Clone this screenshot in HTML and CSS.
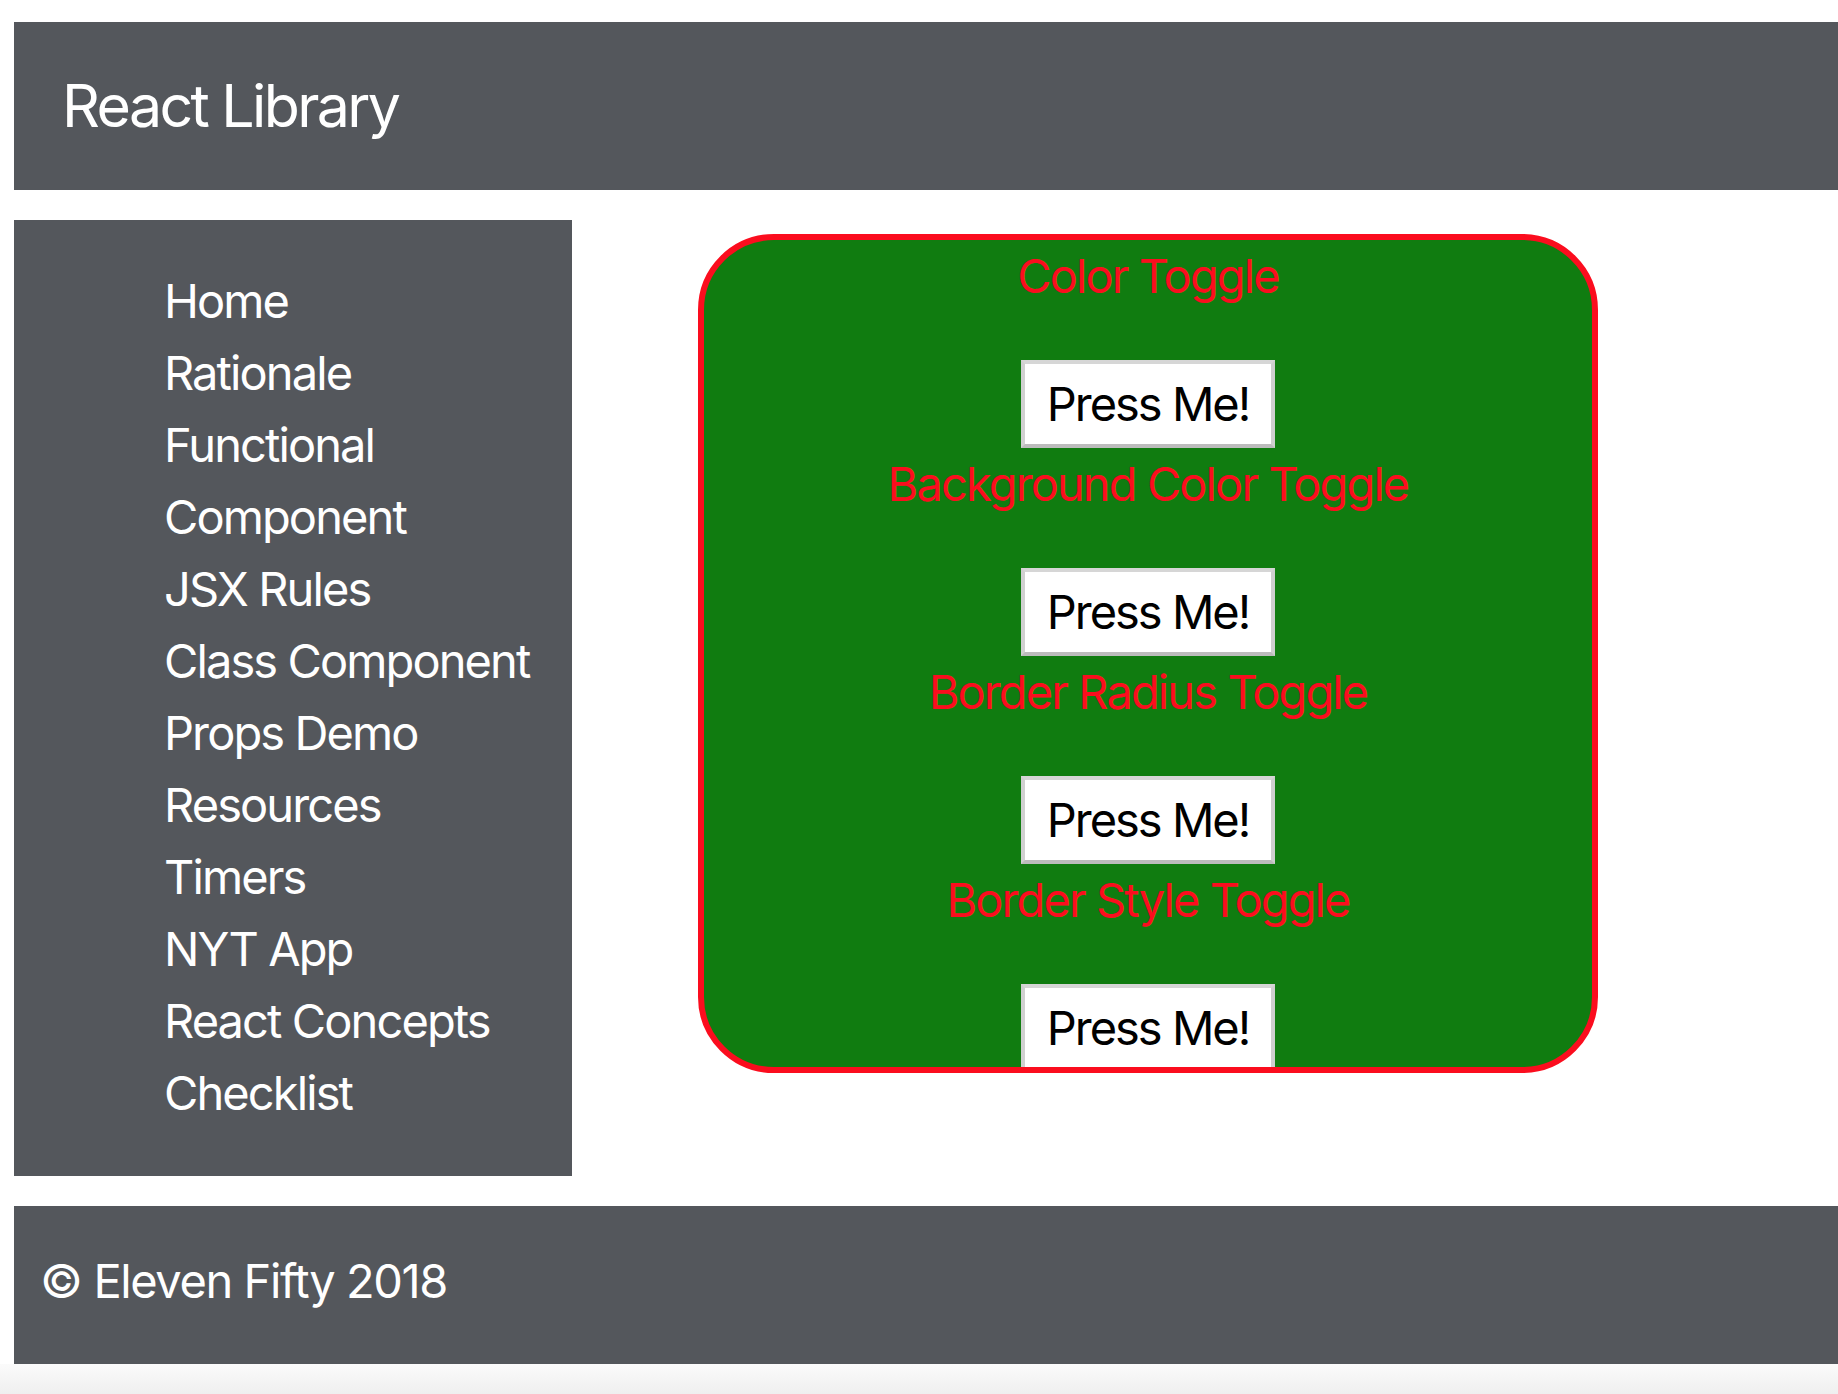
FILE: index.html
```html
<!DOCTYPE html>
<html lang="en">
<head>
<meta charset="utf-8">
<title>React Library</title>
<link rel="stylesheet" href="styles.css">
</head>
<body>
<div class="page">
  <header class="topbar">
    <span class="brand">React Library</span>
  </header>
  <div class="middle">
    <nav class="sidebar">
      <ul class="nav-list">
        <li>Home</li>
        <li>Rationale</li>
        <li>Functional</li>
        <li>Component</li>
        <li>JSX Rules</li>
        <li>Class Component</li>
        <li>Props Demo</li>
        <li>Resources</li>
        <li>Timers</li>
        <li>NYT App</li>
        <li>React Concepts</li>
        <li>Checklist</li>
      </ul>
    </nav>
    <main class="content">
      <div class="toggle-box">
        <p class="toggle-label">Color Toggle</p>
        <button class="press-btn">Press Me!</button>
        <p class="toggle-label">Background Color Toggle</p>
        <button class="press-btn">Press Me!</button>
        <p class="toggle-label">Border Radius Toggle</p>
        <button class="press-btn">Press Me!</button>
        <p class="toggle-label">Border Style Toggle</p>
        <button class="press-btn">Press Me!</button>
      </div>
    </main>
  </div>
  <footer class="footer">
    <span class="copy">© Eleven Fifty 2018</span>
  </footer>
</div>
<div class="shade"></div>
</body>
</html>
```

FILE: styles.css
```css
* { box-sizing: border-box; }
html, body { margin: 0; padding: 0; background: #ffffff; }
body {
  font-family: Inter, "Noto Sans", sans-serif;
  color: #ffffff;
  width: 1838px;
  overflow: hidden;
}
.page { padding: 22px 0 0 14px; }
.topbar {
  height: 168px;
  background: #54575c;
  display: flex;
  align-items: center;
  padding-left: 48px;
}
.brand { font-size: 59px; line-height: 72px; letter-spacing: -2.6px; }
.middle { display: flex; align-items: flex-start; margin-top: 30px; }
.sidebar {
  width: 558px;
  height: 956px;
  background: #54575c;
  padding: 45px 0 0 150px;
}
.nav-list { list-style: none; margin: 0; padding: 0; }
.nav-list li { font-size: 47px; line-height: 72px; letter-spacing: -1.9px; white-space: nowrap; }
.content { padding: 14px 0 0 126px; }
.toggle-box {
  width: 900px;
  height: 839px;
  background: #107c10;
  border: 6px solid #fb0d1e;
  border-radius: 76px;
  overflow: hidden;
  display: flex;
  flex-direction: column;
  align-items: center;
}
.toggle-label {
  margin: 0 0 48px;
  font-size: 47px;
  line-height: 72px;
  letter-spacing: -1.9px;
  color: #fb0d1e;
  white-space: nowrap;
}
.press-btn {
  flex: none;
  height: 88px;
  font-family: Inter, "Noto Sans", sans-serif;
  font-size: 47px;
  line-height: 58px;
  letter-spacing: -2px;
  color: #000;
  background: #fff;
  border-style: solid;
  border-width: 4px;
  border-color: #d6d6d6 #cfcfcf #bcbcbc #d0d0d0;
  padding: 11px 22px;
  border-radius: 0;
}
.footer {
  margin-top: 30px;
  height: 158px;
  background: #54575c;
  padding: 39px 0 0 26px;
}
.copy { font-size: 47px; line-height: 72px; letter-spacing: -1.4px; }
.shade {
  height: 30px;
  background: linear-gradient(#fbfbfb, #efefef);
}
```
